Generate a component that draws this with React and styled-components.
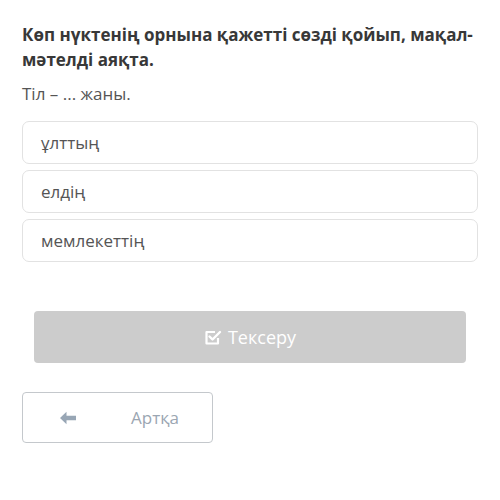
import React from 'react';
import styled, { createGlobalStyle } from 'styled-components';

const Global = createGlobalStyle`
    body {
        margin: 0;
        background: #fff;
        font-family: "Open Sans", "Noto Sans", sans-serif;
    }
`

const Page = styled.div`
    padding: 22px 22px 0 22px;
`

const Title = styled.h1`
    margin: 0;
    font-size: 17px;
    line-height: 25px;
    font-weight: 700;
    color: #383838;
`

const Prompt = styled.p`
    margin: 10px 0 16px;
    font-size: 17px;
    line-height: 23px;
    color: #555;
`

const Options = styled.div`
    display: flex;
    flex-direction: column;
    gap: 6px;
`

const Option = styled.div`
    height: 43px;
    box-sizing: border-box;
    border: 1px solid #e2e2e2;
    border-radius: 7px;
    padding: 0 18px;
    display: flex;
    align-items: center;
    font-size: 17px;
    color: #555;
`

const CheckButton = styled.button`
    display: flex;
    align-items: center;
    justify-content: center;
    gap: 6px;
    width: calc(100% - 24px);
    margin: 49px 12px 0;
    height: 52px;
    border: none;
    border-radius: 4px;
    background: #cccccc;
    color: #fff;
    font-family: inherit;
    font-size: 18px;
`

const BackButton = styled.button`
    display: flex;
    align-items: center;
    margin-top: 29px;
    width: 191px;
    height: 51px;
    box-sizing: border-box;
    border: 1px solid #c4c8cc;
    border-radius: 4px;
    background: #fff;
    padding: 0 0 0 36px;
    color: #9ba6b2;
    font-family: inherit;
    font-size: 17px;
`

const BackLabel = styled.span`
    margin-left: 54px;
`

const CheckIcon = () => (
    <svg width="18" height="18" viewBox="0 0 18 18" fill="none">
        <path d="M14 10v5.5H2.5V4H11" stroke="#fff" strokeWidth="2.2" strokeLinejoin="round" />
        <path d="M5.5 8.5l3 3L16 4" stroke="#fff" strokeWidth="2.4" strokeLinecap="round" strokeLinejoin="round" />
    </svg>
)

const ArrowIcon = () => (
    <svg width="18" height="14" viewBox="0 0 18 14">
        <path d="M7.5 0.8L1 7l6.5 6.2V9.2H17V4.8H7.5z" fill="#98a6b5" />
    </svg>
)

const options = ['ұлттың', 'елдің', 'мемлекеттің'];

export default function App() {
    return <Page>
        <Global />
        <Title>Көп нүктенің орнына қажетті сөзді қойып, мақал-мәтелді аяқта.</Title>
        <Prompt>Тіл – ... жаны.</Prompt>
        <Options>
            {options.map(o => <Option key={o}>{o}</Option>)}
        </Options>
        <CheckButton><CheckIcon />Тексеру</CheckButton>
        <BackButton><ArrowIcon /><BackLabel>Артқа</BackLabel></BackButton>
    </Page>
}
